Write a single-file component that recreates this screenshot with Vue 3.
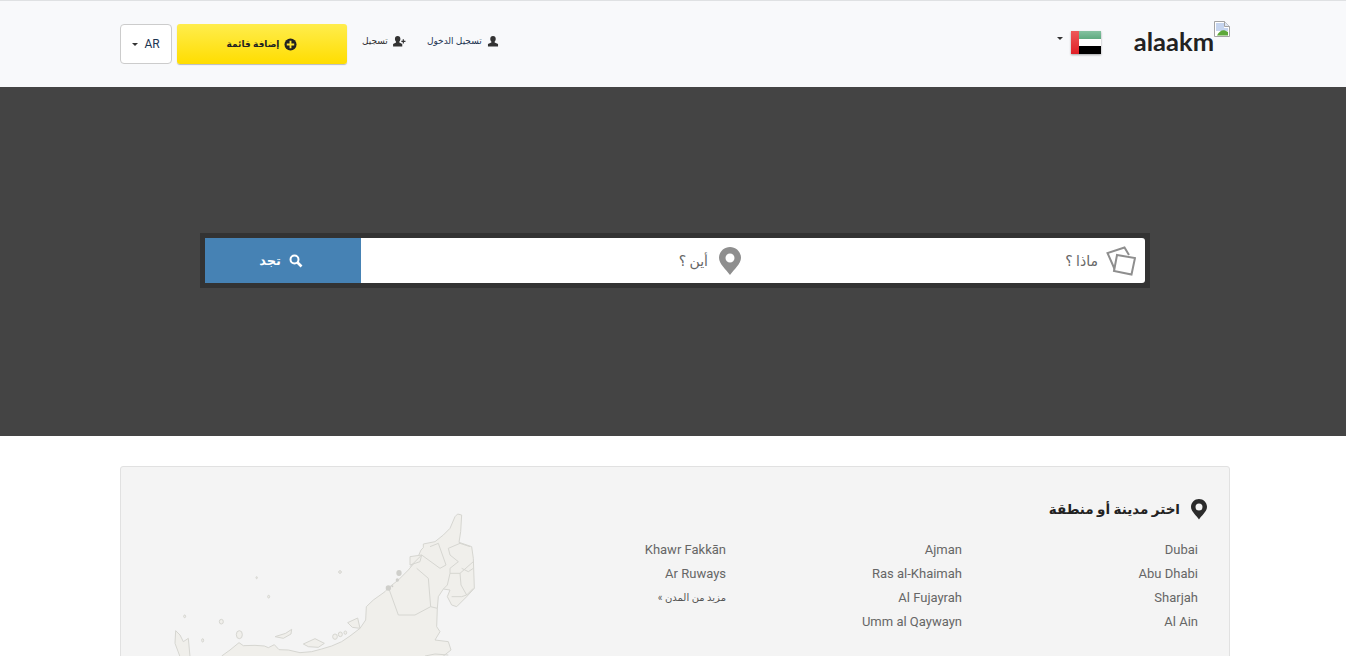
<script setup>
const cityColumns = [
  ['Dubai', 'Abu Dhabi', 'Sharjah', 'Al Ain'],
  ['Ajman', 'Ras al-Khaimah', 'Al Fujayrah', 'Umm al Qaywayn'],
  ['Khawr Fakkān', 'Ar Ruways']
]
const islands = [
  [425, 233, 2, 3], [461, 290, 3, 4], [675, 216, 4, 4], [209, 349, 3, 4],
  [263, 421, 3, 5], [319, 365, 6, 7], [373, 404, 9, 12], [660, 410, 7, 8],
  [676, 403, 6, 7], [691, 398, 4, 5]
]
const dots = [[852, 219, 8, 9], [847, 240, 5, 5], [820, 264, 8, 8], [832, 259, 3, 3]]
</script>

<template>
  <div class="page">
    <header class="top">
      <div class="bar">
        <div class="bar-side">
          <button class="lang"><i class="caret"></i>AR</button>
          <a class="add">
            <svg viewBox="0 0 14 14" width="13" height="13"><circle cx="7" cy="7" r="6.5" fill="#222" /><path d="M6 3h2v3h3v2H8v3H6V8H3V6h3z" fill="#ffe632" /></svg>
            <span>إضافة قائمة</span>
          </a>
          <a class="link reg">
            <svg viewBox="0 0 14 12" width="13" height="11"><path d="M5 0c2 0 3 1.300 3 3.200 0 1.300-.6 2.300-1.200 2.900v1L10 8.600V11.500H0V8.600l3.200-1.500v-1C2.600 5.500 2 4.500 2 3.200 2 1.300 3 0 5 0z" fill="#333" /><path d="M10.500 3.500h1.300v1.700h1.700v1.300h-1.700v1.700h-1.300V6.500H9V5.200h1.500z" fill="#333" /></svg>
            <span>تسجيل</span>
          </a>
          <a class="link login">
            <svg viewBox="0 0 12 12" width="12" height="11"><path d="M6 0c2 0 3 1.300 3 3.200 0 1.300-.6 2.300-1.200 2.900v1L11.500 8.600V11.500H.5V8.600l3.700-1.500v-1C3.600 5.500 3 4.500 3 3.200 3 1.300 4 0 6 0z" fill="#333" /></svg>
            <span>تسجيل الدخول</span>
          </a>
        </div>
        <div class="bar-side">
          <i class="caret country"></i>
          <div class="flag">
            <div class="flag-red"></div>
            <div class="flag-bands"><i class="g"></i><i class="w"></i><i class="b"></i></div>
          </div>
          <div class="logo">
            <span>alaakm</span>
            <svg class="broken" viewBox="0 0 16 16" width="16" height="16">
              <path d="M.5.500h10l5 5v10H.5z" fill="#fff" stroke="#a3a3a3" />
              <path d="M10.500.500v5h5" fill="#dfe7f3" stroke="#a3a3a3" />
              <path d="M2 2h8v5h4v3H2z" fill="#c6d5ef" />
              <path d="M3 14.500c2-4 5-6 8-5l3 1.500v3.500z" fill="#5da83a" />
            </svg>
          </div>
        </div>
      </div>
    </header>

    <section class="hero">
      <div class="search">
        <a class="find">
          <svg viewBox="0 0 14 14" width="14" height="14"><circle cx="5.500" cy="5.500" r="4" fill="none" stroke="#fff" stroke-width="2" /><path d="M8.500 8.500l4 4" stroke="#fff" stroke-width="2.600" /></svg>
          <span>تجد</span>
        </a>
        <div class="fields">
          <div class="field first">
            <svg viewBox="0 0 30 30" width="30" height="30">
              <path d="M9 24 1.500 7 18.500 1.500 23 9" fill="none" stroke="#8e8e8e" stroke-width="2" />
              <path d="M11 9 29 12 25.500 28.500 8 25z" fill="#fff" stroke="#8e8e8e" stroke-width="2" />
            </svg>
            <span>ماذا ؟</span>
          </div>
          <div class="field second">
            <svg viewBox="0 0 22 28" width="22" height="28"><path fill-rule="evenodd" d="M11 0C5 0 0 4.800 0 10.800 0 17 7 22.500 11 28c4-5.500 11-11 11-17.200C22 4.800 17 0 11 0zm0 6.500a4.500 4.500 0 1 1 0 9 4.500 4.500 0 0 1 0-9z" fill="#8e8e8e" /></svg>
            <span>أين ؟</span>
          </div>
        </div>
      </div>
    </section>

    <section class="cities">
      <div class="panel">
        <svg class="map" viewBox="0 0 1140 558" width="380" height="186">
          <g fill="#f0efeb" stroke="#d6d6d1" stroke-width="3" stroke-linejoin="round">
            <path d="M320 468 345 450 372 428 385 437 420 436 448 438 460 443 478 434 492 449 520 450 555 458 590 455 620 447 650 438 680 425 705 408 735 385 752 360 754 320 775 300 810 275 822 262 850 240 880 210 905 180 918 150 925 143 925 132 960 125 985 105 1005 85 1020 50 1028 42 1040 45 1037 95 1032 127 1070 140 1075 175 1078 265 1055 290 1025 320 1010 315 997 290 1005 270 985 267 970 290 967 325 965 380 975 395 960 420 1000 425 1008 450 985 468 985 560H320z" />
            <path d="M182 392 180 430 195 470 225 470 220 415 205 425 195 405z" />
            <path d="M565 432 600 416 628 430 610 442 580 440z" />
            <path d="M480 410 512 400 530 388 528 402 505 415z" />
            <path d="M698 368 728 354 735 385 712 382z" />
            <path d="M885 170 920 165 915 185 885 195z" />
            <ellipse v-for="(i, n) in islands" :key="n" :cx="i[0]" :cy="i[1]" :rx="i[2]" :ry="i[3]" />
          </g>
          <g fill="none" stroke="#d6d6d1" stroke-width="3" stroke-linejoin="round">
            <path d="M823 270 850 345 900 345 947 320 967 325" />
            <path d="M905 205 940 235 947 320" />
            <path d="M885 200 920 165 975 205 993 195 970 130 945 140" />
            <path d="M1000 145 1035 130 1065 140" />
            <path d="M1000 145 1005 165 1030 185 1005 205 1005 220 1035 220 1075 185" />
            <path d="M1005 220 997 255 985 267" />
            <path d="M1035 220 1038 255 1055 285 1075 265" />
            <path d="M1010 290 1040 290 1055 285" />
            <path d="M1040 205 1060 215 1075 205" />
            <path d="M930 468 960 462 1000 465" />
          </g>
          <ellipse v-for="(d, n) in dots" :key="n" :cx="d[0]" :cy="d[1]" :rx="d[2]" :ry="d[3]" fill="#cfcfcb" />
        </svg>
        <div class="panel-body">
          <h2>
            <svg viewBox="0 0 16 21" width="16" height="21"><path fill-rule="evenodd" d="M8 0C3.600 0 0 3.500 0 7.800 0 12.500 5 16 8 20.500c3-4.500 8-8 8-12.700C16 3.500 12.400 0 8 0zm0 4.500a3.500 3.500 0 1 1 0 7 3.500 3.500 0 0 1 0-7z" fill="#2b2b2b" /></svg>
            <span>اختر مدينة أو منطقة</span>
          </h2>
          <div class="columns">
            <ul v-for="(col, n) in cityColumns" :key="n">
              <li v-for="city in col" :key="city">{{ city }}</li>
              <li v-if="n === 2" class="more">مزيد من المدن »</li>
            </ul>
          </div>
        </div>
      </div>
    </section>
  </div>
</template>

<style scoped>
.page {
  height: 656px;
  overflow: hidden;
  background: #fff;
  font-family: Roboto, "Liberation Sans", "DejaVu Sans", sans-serif;
}
.top {
  height: 86px;
  background: #f8f9fb;
  border-top: 1px solid #dfe1e3;
}
.bar {
  width: 1110px;
  height: 100%;
  margin-left: 120px;
  display: flex;
  justify-content: space-between;
}
.bar-side {
  display: flex;
  align-items: flex-start;
}
.lang {
  width: 52px;
  height: 40px;
  margin-top: 23px;
  padding: 0;
  display: flex;
  align-items: center;
  justify-content: center;
  gap: 6px;
  background: #fff;
  border: 1px solid #ccc;
  border-radius: 4px;
  color: #1c3552;
  font: 12px Roboto, sans-serif;
}
.caret {
  display: block;
  width: 0;
  height: 0;
  border-left: 3.5px solid transparent;
  border-right: 3.5px solid transparent;
  border-top: 3.5px solid #333;
}
.add {
  width: 170px;
  height: 40px;
  margin: 23px 0 0 5px;
  display: flex;
  align-items: center;
  justify-content: center;
  gap: 5px;
  direction: rtl;
  box-sizing: border-box;
  background: linear-gradient(#ffed4d, #ffdd00);
  border-radius: 3px;
  box-shadow: 0 1px 1px rgba(0, 0, 0, 0.25);
  color: #222;
  font-size: 9px;
  font-weight: 700;
}
.link {
  display: flex;
  align-items: center;
  gap: 5px;
  direction: rtl;
  height: 20px;
  margin-top: 30px;
  color: #333;
  font-size: 9px;
}
.reg {
  margin-left: 15px;
}
.login {
  margin-left: 21px;
  color: #1c3552;
}
.country {
  margin: 36px 8px 0 0;
}
.flag {
  width: 30px;
  height: 23px;
  margin-top: 30px;
  display: flex;
  box-shadow: 0 1px 2px rgba(0, 0, 0, 0.35);
}
.flag-red {
  width: 8px;
  background: linear-gradient(#ee5a5a, #e01f26);
}
.flag-bands {
  flex: 1;
  display: flex;
  flex-direction: column;
}
.flag-bands i {
  flex: 1;
}
.flag-bands .g {
  background: linear-gradient(#84c2a0, #5faa80);
}
.flag-bands .w {
  background: #fff;
}
.flag-bands .b {
  background: #000;
}
.logo {
  margin-left: 33px;
  display: flex;
  align-items: flex-start;
  color: #222;
  font-family: Lato, sans-serif;
  font-size: 25.5px;
  font-weight: 700;
  line-height: 36px;
}
.logo span {
  margin-top: 22px;
}
.broken {
  margin-top: 20px;
}
.hero {
  height: 349px;
  background: #444;
  padding: 146px 0 0 200px;
  box-sizing: border-box;
}
.search {
  width: 950px;
  height: 55px;
  box-sizing: border-box;
  border: 5px solid #333;
  display: flex;
  background: #333;
}
.find {
  width: 156px;
  box-sizing: border-box;
  padding-right: 4px;
  display: flex;
  align-items: center;
  justify-content: center;
  gap: 8px;
  direction: rtl;
  background: #4682b4;
  color: #fff;
  font-size: 13px;
  font-weight: 700;
}
.fields {
  flex: 1;
  display: flex;
  direction: rtl;
  background: #fff;
  border-radius: 0 3px 3px 0;
}
.field {
  flex: 1;
  display: flex;
  align-items: center;
  padding-right: 15px;
  color: #666;
  font-size: 14px;
}
.first {
  gap: 8px;
  padding-right: 9px;
}
.second {
  gap: 11px;
}
.cities {
  width: 1110px;
  margin: 30px 0 0 120px;
}
.panel {
  height: 240px;
  display: flex;
  box-sizing: border-box;
  background: #f4f4f4;
  border: 1px solid #e1e1e1;
  border-radius: 3px;
}
.map {
  flex: none;
  margin: 33px 0 0 -6px;
}
.panel-body {
  flex: 1;
  min-width: 0;
  direction: rtl;
  padding: 32px 22px 0 0;
}
h2 {
  margin: 0;
  display: flex;
  align-items: center;
  gap: 11px;
  color: #222;
  font-size: 13.5px;
  font-weight: 700;
  line-height: 21px;
}
.columns {
  display: grid;
  grid-template-columns: repeat(3, 236px);
  margin: 18px 9px 0 0;
}
ul {
  margin: 0;
  padding: 0;
  list-style: none;
}
li {
  direction: ltr;
  text-align: right;
  color: #666;
  font-size: 13px;
  line-height: 24px;
}
.more {
  direction: rtl;
  text-align: start;
  font-size: 10px;
  color: #555;
}
</style>
